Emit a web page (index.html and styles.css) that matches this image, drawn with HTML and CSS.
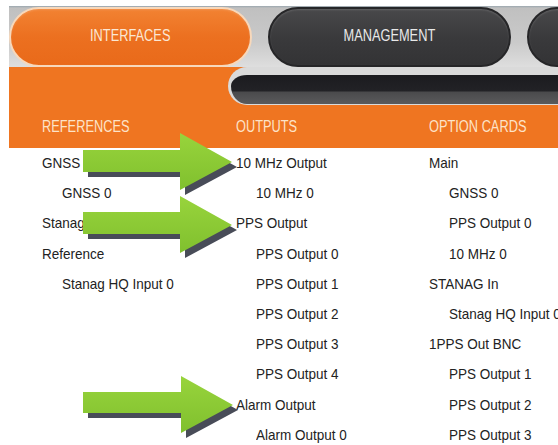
FILE: index.html
```html
<!DOCTYPE html>
<html>
<head>
<meta charset="utf-8">
<link rel="stylesheet" href="styles.css">
</head>
<body>
<div class="screen">
  <div class="chrome">
    <div class="tabs">
      <div class="tab active"><span class="tx">INTERFACES</span></div>
      <div class="tab"><span class="tx">MANAGEMENT</span></div>
      <div class="tab"></div>
    </div>
    <div class="rail">
      <div class="rail-fill"></div>
      <div class="rail-bar"></div>
    </div>
  </div>
  <div class="heads">
    <div class="head"><span class="tx">REFERENCES</span></div>
    <div class="head"><span class="tx">OUTPUTS</span></div>
    <div class="head"><span class="tx">OPTION CARDS</span></div>
  </div>
  <div class="cols">
    <div class="col">
      <div class="row"><span class="tx">GNSS</span></div>
      <div class="row sub"><span class="tx">GNSS 0</span></div>
      <div class="row"><span class="tx">Stanag</span></div>
      <div class="row"><span class="tx">Reference</span></div>
      <div class="row sub"><span class="tx">Stanag HQ Input 0</span></div>
    </div>
    <div class="col">
      <div class="row"><span class="tx">10 MHz Output</span></div>
      <div class="row sub"><span class="tx">10 MHz 0</span></div>
      <div class="row"><span class="tx">PPS Output</span></div>
      <div class="row sub"><span class="tx">PPS Output 0</span></div>
      <div class="row sub"><span class="tx">PPS Output 1</span></div>
      <div class="row sub"><span class="tx">PPS Output 2</span></div>
      <div class="row sub"><span class="tx">PPS Output 3</span></div>
      <div class="row sub"><span class="tx">PPS Output 4</span></div>
      <div class="row"><span class="tx">Alarm Output</span></div>
      <div class="row sub"><span class="tx">Alarm Output 0</span></div>
    </div>
    <div class="col">
      <div class="row"><span class="tx">Main</span></div>
      <div class="row sub"><span class="tx">GNSS 0</span></div>
      <div class="row sub"><span class="tx">PPS Output 0</span></div>
      <div class="row sub"><span class="tx">10 MHz 0</span></div>
      <div class="row"><span class="tx">STANAG In</span></div>
      <div class="row sub"><span class="tx">Stanag HQ Input 0</span></div>
      <div class="row"><span class="tx">1PPS Out BNC</span></div>
      <div class="row sub"><span class="tx">PPS Output 1</span></div>
      <div class="row sub"><span class="tx">PPS Output 2</span></div>
      <div class="row sub"><span class="tx">PPS Output 3</span></div>
    </div>
  </div>
</div>
<svg class="arrows" width="558" height="445" viewBox="0 0 558 445">
  <defs>
    <linearGradient id="g1" x1="0" y1="0" x2="0" y2="1">
      <stop offset="0" stop-color="#98d43c"/>
      <stop offset="1" stop-color="#80c02e"/>
    </linearGradient>
  </defs>
  <g>
    <polygon fill="#484c58" points="88,155 185,155 185,138 237,167 185,195 185,177 88,177"/>
    <polygon fill="url(#g1)" points="83,150 180,150 180,133 232,162 180,190 180,172 83,172"/>
  </g>
  <g>
    <polygon fill="#484c58" points="88,217 185,217 185,201 237,230 185,258 185,239 88,239"/>
    <polygon fill="url(#g1)" points="83,212 180,212 180,196 232,225 180,253 180,234 83,234"/>
  </g>
  <g>
    <polygon fill="#484c58" points="88,397 186,397 186,381 238,410 186,438 186,418 88,418"/>
    <polygon fill="url(#g1)" points="83,392 181,392 181,376 233,405 181,433 181,413 83,413"/>
  </g>
</svg>
</body>
</html>
```

FILE: styles.css
```css
html, body {
  margin: 0;
  padding: 0;
  background: #ffffff;
}

body {
  width: 558px;
  height: 445px;
  overflow: hidden;
  position: relative;
  font-family: "Liberation Sans", Arial, sans-serif;
}

.tx {
  display: inline-block;
  transform: scaleX(0.8);
  transform-origin: left center;
}

.screen {
  margin: 6px 0 0 9px;
  width: 549px;
  height: 439px;
  overflow: hidden;
}

.tabs {
  display: flex;
  gap: 16px;
  height: 61px;
  box-sizing: border-box;
  padding-top: 1px;
  background: linear-gradient(#9aa6ae 0, #c0c0c0 2px, #cacaca 60%, #dedede 100%);
}

.tab {
  flex: 0 0 243px;
  height: 60px;
  box-sizing: border-box;
  border-radius: 30px;
  border: 2px solid #262628;
  background: linear-gradient(#48484a, #3a3a3c 50%, #333335);
  color: #e8e8e8;
  font-size: 16px;
  display: flex;
  align-items: center;
  justify-content: center;
  padding-bottom: 3px;
  box-shadow: inset 0 1px 2px rgba(255,255,255,0.15);
}

.tab .tx {
  transform-origin: center center;
}

.tab.active {
  border-color: #f7d8bb;
  background: linear-gradient(#f28232, #ec7020 50%, #e96a1a);
  color: #fbe7d4;
}

.rail {
  display: flex;
  height: 38px;
  background: #ef7521;
}

.rail-fill {
  flex: 0 0 219px;
}

.rail-bar {
  flex: 1;
  border-style: solid;
  border-color: #dadada;
  border-width: 8px 0 1px 3px;
  border-radius: 22px 0 0 22px;
  background: linear-gradient(#1b1b1f 0, #222226 16px, #4a4a4c 17px, #5a5a5c 100%);
}

.heads,
.cols {
  display: grid;
  grid-template-columns: 194px 193px 1fr;
  padding-left: 33px;
}

.heads {
  height: 43px;
  background: #ef7521;
  align-items: center;
}

.head {
  font-size: 16px;
  color: #fde3c8;
  white-space: nowrap;
  padding-top: 1px;
}

.col {
  display: flex;
  flex-direction: column;
  min-width: 0;
}

.row {
  height: 30.2px;
  line-height: 30.2px;
  font-size: 15px;
  color: #222222;
  white-space: nowrap;
}

.row .tx {
  transform: scaleX(0.9);
}

.row.sub {
  padding-left: 20px;
}

.arrows {
  position: absolute;
  left: 0;
  top: 0;
  pointer-events: none;
}
```
